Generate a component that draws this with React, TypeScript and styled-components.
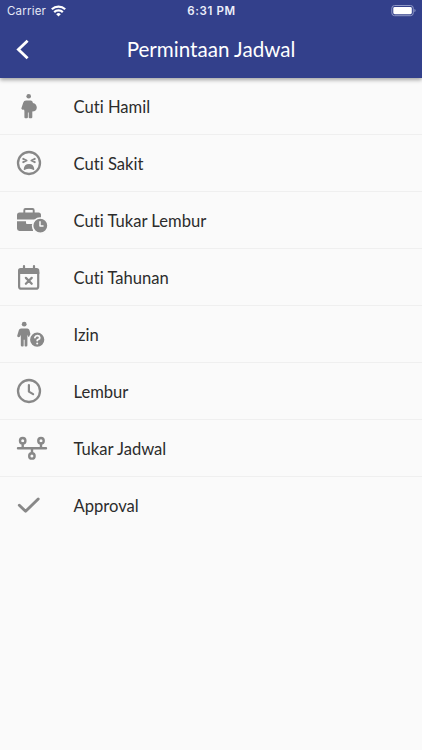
import React from "react";
import styled, { createGlobalStyle } from "styled-components";

const GlobalStyle = createGlobalStyle`
  * { box-sizing: border-box; }
  body { margin: 0; background: #fafafa; }
`;

const Screen = styled.div`
  width: 100%;
  min-height: 750px;
  background: #fafafa;
  font-family: Lato, sans-serif;
  font-variant-ligatures: none;
`;

const Header = styled.header`
  height: 78px;
  background: #33408b;
  color: #fff;
  box-shadow: 0 2px 4px rgba(0, 0, 0, 0.35);
`;

const StatusBar = styled.div`
  display: grid;
  grid-template-columns: 1fr auto 1fr;
  align-items: center;
  height: 22px;
  padding: 0 6px 0 7px;
  font-family: Inter, sans-serif;
  font-size: 11.5px;
  line-height: 22px;
`;

const Carrier = styled.div`
  display: flex;
  align-items: center;
  gap: 5px;
  letter-spacing: 0.2px;
  color: #e4e7f5;
`;

const Clock = styled.div`
  font-weight: 600;
  letter-spacing: 0.6px;
  color: #eceefa;
`;

const Battery = styled.svg`
  display: block;
  justify-self: end;
`;

const TitleBar = styled.div`
  display: grid;
  grid-template-columns: 46px 1fr 46px;
  align-items: center;
  height: 56px;
`;

const BackButton = styled.button`
  display: flex;
  padding: 0 0 0 14px;
  border: 0;
  background: none;
  color: inherit;
`;

const Title = styled.h1`
  margin: 0;
  padding-bottom: 2px;
  font-size: 20.6px;
  font-weight: 400;
  line-height: 54px;
  text-align: center;
`;

const List = styled.ul`
  margin: 0;
  padding: 0;
  list-style: none;
`;

const Row = styled.li<{ $last: boolean }>`
  display: flex;
  align-items: center;
  height: 57px;
  padding: 1px 14px 0;
  border-bottom: 1px solid ${(p) => (p.$last ? "transparent" : "#efefef")};
`;

const Icon = styled.svg`
  display: block;
  flex: none;
  width: 36px;
  height: 30px;
  color: #888;
  fill: currentColor;
  stroke-linecap: round;
  stroke-linejoin: round;
`;

const Label = styled.span`
  margin-left: 23.5px;
  padding-top: 1px;
  font-size: 16.6px;
  line-height: 24px;
  color: #2c2c2c;
`;

const Badge = styled.circle`
  stroke: #fafafa;
  stroke-width: 1.6px;
`;

const Line = styled.path<{ $width?: number; $light?: boolean }>`
  fill: none;
  stroke: ${(p) => (p.$light ? "#fafafa" : "currentColor")};
  stroke-width: ${(p) => p.$width ?? 2.2}px;
`;

const Ring = styled.circle<{ $width?: number }>`
  fill: none;
  stroke: currentColor;
  stroke-width: ${(p) => p.$width ?? 2.3}px;
`;

const items: { label: string; icon: React.ReactNode }[] = [
  {
    label: "Cuti Hamil",
    icon: (
      <>
        <circle cx="14.7" cy="4.2" r="2.3" />
        <path d="M12 8.4h4.6c1.5 0 2.1.9 2.3 2.700 2.400.4 3.900 2.200 3.900 4.500 0 2.500-1.800 4-4.500 4v5.600q0 1.100-1.100 1.100h-1.500q-1 0-1-1.100v-4.600h-.8v4.600q0 1.100-1.100 1.100h-1.400q-1 0-1-1.100v-6.100L10 17.600c-.8.5-2.800 0-2.600-1.300L9.200 10.700q.7-2.300 2.800-2.300z" />
      </>
    ),
  },
  {
    label: "Cuti Sakit",
    icon: (
      <>
        <Ring cx="15" cy="14" r="11" />
        <Line $width={1.9} d="M9.200 9.800l3.400 1.700-3.400 1.700M20.800 9.800l-3.400 1.700 3.400 1.700" />
        <path d="M9.700 20.300c.3-3.600 2.200-5.300 5.300-5.300s5 1.700 5.300 5.300c0 .8-.7.8-1.300.5-2.300-1.300-5.700-1.300-8 0-.6.3-1.300.3-1.300-.5z" />
      </>
    ),
  },
  {
    label: "Cuti Tukar Lembur",
    icon: (
      <>
        <Line $width={1.900} d="M10.300 7V4.200q0-1.200 1.200-1.200h7q1.200 0 1.200 1.200V7" />
        <path d="M5.500 6.500h19q2.500 0 2.500 2.500v4.600H3V9q0-2.500 2.500-2.500z" />
        <path d="M3 15.300h9v1.600q0 1 1 1h6v7H5.500Q3 24.900 3 22.500z" />
        <Badge cx="26.300" cy="19.700" r="7.700" />
        <Line $light $width={1.500} d="M26 15.800v4.200h3" />
      </>
    ),
  },
  {
    label: "Cuti Tahunan",
    icon: (
      <>
        <Line d="M10 3v4M20 3v4" />
        <Line d="M5.100 9v14.400q0 2.300 2.300 2.300h14.500q2.300 0 2.300-2.300V9" />
        <path d="M6.600 5h16.100q2.600 0 2.600 2.500V11H4V7.500Q4 5 6.600 5z" />
        <Line $width={2.300} d="M11.900 14.900l5.800 5.800M17.700 14.900l-5.800 5.800" />
      </>
    ),
  },
  {
    label: "Izin",
    icon: (
      <>
        <circle cx="10.200" cy="4.200" r="2.400" />
        <path d="M7 8.400h6.300q1.600 0 2.100 1.600l1.500 5.800c.2 1.500-1.900 1.900-2.700.8l-.8-1.900v10.500q0 1.300-1.200 1.300h-.8q-.8 0-.8-1v-5.700h-.9v5.700q0 1-.8 1h-.8q-1.300 0-1.300-1.300V14.700l-.8 1.900c-.8 1.100-3 .7-2.800-.8L4.900 10q.5-1.600 2.100-1.600z" />
        <Badge cx="23.200" cy="19.700" r="7.900" />
        <Line $light $width={1.800} d="M20.900 17.600c.4-1.500 1.300-1.900 2.400-1.900 3 0 3.100 3 1.100 3.700q-1.200.3-1.200 1.200" />
        <Line $light $width={2} d="M23.200 23.600v.01" />
      </>
    ),
  },
  {
    label: "Lembur",
    icon: (
      <>
        <Ring cx="15" cy="14" r="11" />
        <Line d="M14.900 8v6.600l4.200 2.500" />
      </>
    ),
  },
  {
    label: "Tukar Jadwal",
    icon: (
      <>
        <Line $width={2.400} d="M4 14.300h28M8.700 9.500v4.800M27 9.500v4.800M18 14.300v4.800" />
        <Ring cx="8.700" cy="6.700" r="2.700" $width={2.400} />
        <Ring cx="27" cy="6.700" r="2.700" $width={2.400} />
        <Ring cx="17.900" cy="21.900" r="2.700" $width={2.400} />
      </>
    ),
  },
  {
    label: "Approval",
    icon: <Line $width={2.900} d="M5.300 14.300l6.300 6 12.600-12.300" />,
  },
];

export default function App() {
  return (
    <Screen>
      <GlobalStyle />
      <Header>
        <StatusBar>
          <Carrier>
            Carrier
            <svg width="15" height="12" viewBox="0 0 15 12" fill="none" stroke="#fff" strokeWidth="2.2">
              <path d="M.8 4.300a9.700 9.700 0 0 1 13.400 0" />
              <path d="M3.200 7.100a6.200 6.200 0 0 1 8.600 0" />
              <path d="M7.500 11.500L5.200 9.200a3.300 3.300 0 0 1 4.600 0z" fill="#fff" stroke="none" />
            </svg>
          </Carrier>
          <Clock>6:31 PM</Clock>
          <Battery width="25" height="12" viewBox="0 0 25 12">
            <rect x=".8" y=".5" width="21.500" height="10.200" rx="2.800" fill="none" stroke="#8f98c6" />
            <rect x="2.300" y="2" width="18.500" height="7.200" rx="1.400" fill="#fff" />
            <path d="M23.400 3.900v3.400q1.200-.4 1.200-1.700t-1.200-1.700z" fill="#8f98c6" />
          </Battery>
        </StatusBar>
        <TitleBar>
          <BackButton aria-label="Kembali">
            <svg width="18" height="22" viewBox="0 0 18 22" fill="none" stroke="#fff" strokeWidth="2.800">
              <path d="M13.600 1.800L4.400 10.500l9.200 8.800" />
            </svg>
          </BackButton>
          <Title>Permintaan Jadwal</Title>
        </TitleBar>
      </Header>
      <List>
        {items.map((item, i) => (
          <Row key={item.label} $last={i === items.length - 1}>
            <Icon viewBox="0 0 36 30" aria-hidden="true">
              {item.icon}
            </Icon>
            <Label>{item.label}</Label>
          </Row>
        ))}
      </List>
    </Screen>
  );
}
